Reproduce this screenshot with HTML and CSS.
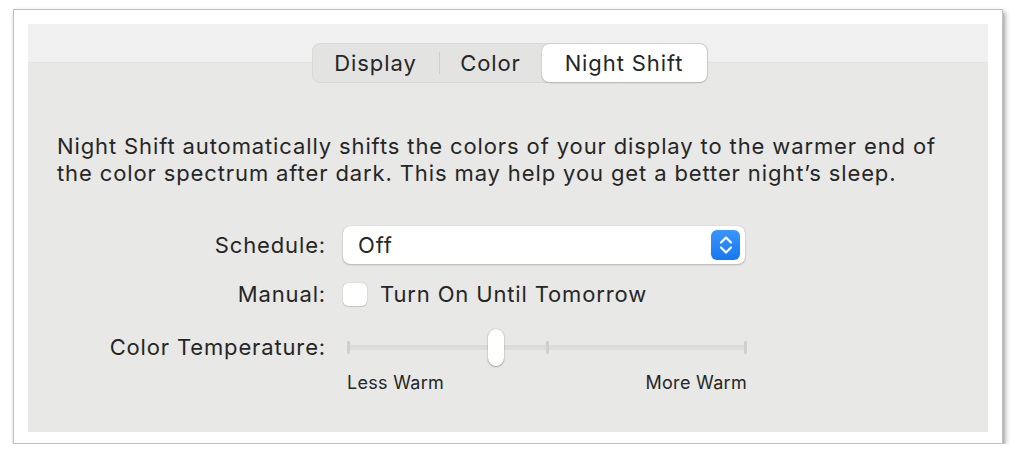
FILE: index.html
```html
<!DOCTYPE html>
<html lang="en">

<head>
  <meta charset="UTF-8" />
  <meta name="viewport" content="width=device-width, initial-scale=1.0" />
  <title>Night Shift</title>
  <link rel="stylesheet" href="styles.css">
</head>

<body>
  <div class="window">
    <div class="panel">
      <div class="tabs">
        <div class="segmented">
          <span class="seg seg-display">Display</span>
          <span class="seg-divider"></span>
          <span class="seg seg-color">Color</span>
          <span class="seg seg-night selected">Night Shift</span>
        </div>
      </div>

      <p class="intro">Night Shift automatically shifts the colors of your display to the warmer end of the color spectrum after dark. This may help you get a better night’s sleep.</p>

      <div class="form">
        <div class="label">Schedule:</div>
        <div class="popup">
          <span>Off</span>
          <span class="stepper">
            <svg width="18" height="26" viewBox="0 0 18 26">
              <path d="M4 10.5 L9 5.5 L14 10.5 M4 15.5 L9 20.5 L14 15.5" fill="none" stroke="#fff" stroke-width="2.2" stroke-linecap="round" stroke-linejoin="round" />
            </svg>
          </span>
        </div>

        <div class="label">Manual:</div>
        <label class="check">
          <span class="box"></span>
          <span>Turn On Until Tomorrow</span>
        </label>

        <div class="label">Color Temperature:</div>
        <div class="slider">
          <div class="track">
            <span class="tick"></span>
            <span class="tick"></span>
            <span class="tick"></span>
          </div>
          <span class="knob"></span>
        </div>

        <div></div>
        <div class="slider-labels">
          <span>Less Warm</span>
          <span>More Warm</span>
        </div>
      </div>
    </div>
  </div>
</body>

</html>
```

FILE: styles.css
```css
body {
  margin: 0;
  padding: 0;
  background: #fff;
  font-family: Inter, "Noto Sans", sans-serif;
  color: #262626;
}

.window {
  margin: 9px 0 0 13px;
  width: 960px;
  height: 408px;
  border: 1px solid #c0c0c0;
  box-shadow: 2px 3px 5px rgba(0, 0, 0, 0.4);
  padding: 14px 14px 11px 14px;
  background: #fff;
}

.panel {
  height: 100%;
  background: linear-gradient(#eff0ef 0, #eff0ef 38px, #e1e2e1 38px, #e1e2e1 39px, #e8e8e7 39px);
}

.tabs {
  display: flex;
  justify-content: center;
  padding: 19px 0 0 3px;
}

.segmented {
  display: flex;
  align-items: center;
  height: 38px;
  background: #e3e3e2;
  border: 1px solid #d9d9d8;
  border-radius: 8px;
  font-size: 22px;
  letter-spacing: 0.9px;
}

.seg {
  line-height: 38px;
  text-align: center;
}

.seg-display {
  width: 126px;
}

.seg-color {
  width: 102px;
}

.seg-night {
  width: 165px;
}

.seg-divider {
  width: 1px;
  height: 22px;
  background: #cfcfce;
}

.seg.selected {
  background: #fff;
  border-radius: 7px;
  box-shadow: 0 0 1px rgba(0, 0, 0, 0.3), 0 1px 2px rgba(0, 0, 0, 0.15);
}

.intro {
  margin: 50px 0 0 29px;
  font-size: 22px;
  line-height: 27px;
  letter-spacing: 0.88px;
  width: 915px;
}

.form {
  display: grid;
  grid-template-columns: 298px 402px;
  grid-template-rows: 38px 60px 46px 24px;
  column-gap: 17px;
  margin-top: 39px;
  font-size: 22px;
  letter-spacing: 0.85px;
  align-items: center;
}

.label {
  text-align: right;
}

.popup {
  height: 38px;
  display: flex;
  align-items: center;
  justify-content: space-between;
  background: #fff;
  border-radius: 7px;
  box-shadow: 0 0 1px rgba(0, 0, 0, 0.3), 0 1px 2px rgba(0, 0, 0, 0.2);
  padding: 0 5px 0 15px;
}

.stepper {
  width: 29px;
  height: 30px;
  border-radius: 6px;
  background: linear-gradient(#3a95fc, #1577f2);
  display: flex;
  align-items: center;
  justify-content: center;
}

.check {
  display: flex;
  align-items: center;
  gap: 13px;
}

.box {
  width: 24px;
  height: 23px;
  background: #fff;
  border-radius: 5px;
  box-shadow: 0 0 1px rgba(0, 0, 0, 0.35), 0 1px 1px rgba(0, 0, 0, 0.12);
}

.slider {
  position: relative;
  height: 37px;
  width: 402px;
}

.track {
  display: flex;
  justify-content: space-between;
  align-items: center;
  margin: 16px 0 0 4px;
  width: 400px;
  height: 5px;
  background: #dcdcdb;
  border-radius: 3px;
}

.tick {
  width: 3px;
  height: 13px;
  background: #d0d0cf;
  border-radius: 1px;
}

.knob {
  position: absolute;
  left: 145px;
  top: 0;
  width: 16px;
  height: 37px;
  background: #fff;
  border-radius: 8px;
  box-shadow: 0 0 1px rgba(0, 0, 0, 0.35), 0 1px 2px rgba(0, 0, 0, 0.25);
}

.slider-labels {
  display: flex;
  justify-content: space-between;
  width: 400px;
  margin-left: 4px;
  font-size: 18px;
  letter-spacing: 0.3px;
}
```
